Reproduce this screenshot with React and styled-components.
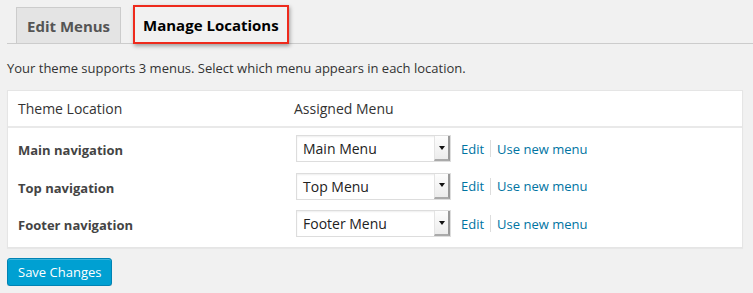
import React from "react";
import styled, { createGlobalStyle } from "styled-components";

const GlobalStyle = createGlobalStyle`
  body {
    margin: 0;
    background: #f1f1f1;
    font-family: "Open Sans", "Liberation Sans", sans-serif;
    color: #444;
  }
`;

const Page = styled.div`
  padding: 0 7px;
  width: 753px;
  box-sizing: border-box;
`;

const TabBar = styled.div`
  display: flex;
  align-items: flex-end;
  gap: 12px;
  padding: 5px 0 0 9px;
  border-bottom: 1px solid #ccc;
  margin-right: -7px;
  height: 44px;
  box-sizing: border-box;
`;

const Tab = styled.a`
  display: flex;
  align-items: center;
  height: ${p => (p.active ? "39px" : "37px")};
  box-sizing: border-box;
  padding: 0 ${p => (p.active ? "8px" : "10px")};
  margin-bottom: -1px;
  font-size: 15px;
  font-weight: 700;
  text-decoration: none;
  color: ${p => (p.active ? "#000" : "#555")};
  background: ${p => (p.active ? "#f1f1f1" : "#e4e4e4")};
  border: ${p => (p.active ? "2px solid #ee2a1c" : "1px solid #ccc")};
  box-shadow: ${p => (p.active ? "1px 2px 4px rgba(0,0,0,0.35)" : "none")};
`;

const Intro = styled.p`
  margin: 14px 0 0;
  font-size: 13px;
  line-height: 20px;
  color: #333;
`;

const Table = styled.div`
  margin-top: 12px;
  width: 734px;
  background: #fff;
  border: 1px solid #e5e5e5;
  box-shadow: 0 1px 1px rgba(0, 0, 0, 0.04);
`;

const HeadRow = styled.div`
  display: grid;
  grid-template-columns: 276px 1fr;
  height: 35px;
  align-items: center;
  padding-left: 10px;
  border-bottom: 2px solid #e9e9e9;
  font-size: 14px;
  color: #333;
`;

const Body = styled.div`
  padding: 2px 0 4px;
`;

const Row = styled.div`
  display: grid;
  grid-template-columns: 278px 1fr;
  height: 37.5px;
  align-items: center;
  padding-left: 10px;
`;

const Label = styled.span`
  font-size: 13px;
  font-weight: 700;
  color: #444;
  padding-top: 3px;
`;

const Cell = styled.div`
  display: flex;
  align-items: center;
`;

const Select = styled.div`
  display: flex;
  align-items: stretch;
  width: 155px;
  height: 27px;
  box-sizing: border-box;
  border: 1px solid #ddd;
  box-shadow: inset 0 1px 2px rgba(0, 0, 0, 0.07);
  background: #fff;
`;

const SelectText = styled.span`
  flex: 1;
  padding-left: 6px;
  font-size: 14px;
  line-height: 25px;
  color: #222;
`;

const Arrow = styled.span`
  width: 13px;
  display: flex;
  align-items: center;
  justify-content: center;
  background: linear-gradient(#fdfdfd, #ececec);
  border-left: 1px solid #e4e4e4;
  border-right: 2px solid #999;
  border-bottom: 2px solid #aaa;
  &::after {
    content: "";
    border-left: 3px solid transparent;
    border-right: 3px solid transparent;
    border-top: 4px solid #111;
  }
`;

const Links = styled.span`
  display: flex;
  align-items: center;
  margin-left: 10px;
  font-size: 13px;
`;

const Link = styled.a`
  color: #0074a2;
  text-decoration: none;
`;

const Sep = styled.span`
  width: 1px;
  height: 17px;
  background: #ddd;
  margin: 0 6px;
`;

const Button = styled.button`
  margin-top: 10px;
  height: 28px;
  padding: 0 10px;
  font-family: inherit;
  font-size: 13px;
  color: #fff;
  background: #00a0d2;
  border: 1px solid #0083b4;
  border-radius: 3px;
  box-shadow: inset 0 1px 0 rgba(120, 200, 230, 0.5), 0 1px 0 rgba(0, 0, 0, 0.15);
`;

const locations = [
  ["Main navigation", "Main Menu"],
  ["Top navigation", "Top Menu"],
  ["Footer navigation", "Footer Menu"],
];

export default function App() {
  return (
    <Page>
      <GlobalStyle />
      <TabBar>
        <Tab>Edit Menus</Tab>
        <Tab active>Manage Locations</Tab>
      </TabBar>
      <Intro>Your theme supports 3 menus. Select which menu appears in each location.</Intro>
      <Table>
        <HeadRow>
          <span>Theme Location</span>
          <span>Assigned Menu</span>
        </HeadRow>
        <Body>
          {locations.map(([loc, menu]) => (
            <Row key={loc}>
              <Label>{loc}</Label>
              <Cell>
                <Select>
                  <SelectText>{menu}</SelectText>
                  <Arrow />
                </Select>
                <Links>
                  <Link href="#edit">Edit</Link>
                  <Sep />
                  <Link href="#new">Use new menu</Link>
                </Links>
              </Cell>
            </Row>
          ))}
        </Body>
      </Table>
      <Button>Save Changes</Button>
    </Page>
  );
}
